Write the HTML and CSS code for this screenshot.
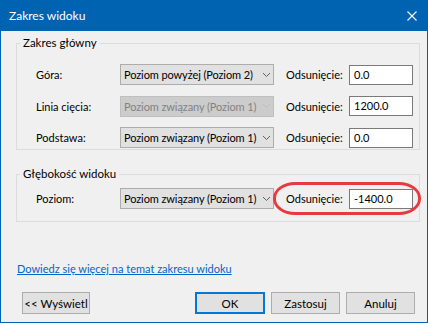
FILE: index.html
```html
<!DOCTYPE html>
<html lang="pl">
<head>
  <meta charset="UTF-8">
  <title>Zakres widoku</title>
  <link rel="stylesheet" href="styles.css">
</head>
<body>
  <div class="window">
    <div class="titlebar">
      <span class="title">Zakres widoku</span>
      <svg class="close" width="10" height="10" viewBox="0 0 10 10">
        <path d="M0.5 0.5 L9.5 9.5 M9.5 0.5 L0.5 9.5" stroke="#fff" stroke-width="1.1" fill="none"/>
      </svg>
    </div>

    <div class="content">
      <fieldset class="group group-main">
        <legend>Zakres główny</legend>
        <div class="rows">
          <label class="lbl">Góra:</label>
          <div class="combo"><span class="combo-text">Poziom powyżej (Poziom 2)</span><svg class="chev" width="7" height="4" viewBox="0 0 7 4"><path d="M0 0 L3.5 3.5 L7 0" /></svg></div>
          <label class="lbl off">Odsunięcie:</label>
          <div class="field">0.0</div>

          <label class="lbl">Linia cięcia:</label>
          <div class="combo disabled"><span class="combo-text">Poziom związany (Poziom 1)</span><svg class="chev" width="7" height="4" viewBox="0 0 7 4"><path d="M0 0 L3.5 3.5 L7 0" /></svg></div>
          <label class="lbl off">Odsunięcie:</label>
          <div class="field">1200.0</div>

          <label class="lbl">Podstawa:</label>
          <div class="combo"><span class="combo-text">Poziom związany (Poziom 1)</span><svg class="chev" width="7" height="4" viewBox="0 0 7 4"><path d="M0 0 L3.5 3.5 L7 0" /></svg></div>
          <label class="lbl off">Odsunięcie:</label>
          <div class="field">0.0</div>
        </div>
      </fieldset>

      <fieldset class="group group-depth">
        <legend>Głębokość widoku</legend>
        <div class="rows">
          <label class="lbl">Poziom:</label>
          <div class="combo"><span class="combo-text">Poziom związany (Poziom 1)</span><svg class="chev" width="7" height="4" viewBox="0 0 7 4"><path d="M0 0 L3.5 3.5 L7 0" /></svg></div>
          <label class="lbl off marked">Odsunięcie:<span class="mark"></span></label>
          <div class="field">-1400.0</div>
        </div>
      </fieldset>

      <a class="help-link" href="#">Dowiedz się więcej na temat zakresu widoku</a>

      <div class="buttons">
        <button class="btn">&lt;&lt; Wyświetl</button>
        <div class="spacer"></div>
        <button class="btn default">OK</button>
        <button class="btn">Zastosuj</button>
        <button class="btn">Anuluj</button>
      </div>
    </div>
  </div>
</body>
</html>
```

FILE: styles.css
```css
    * {
      box-sizing: border-box;
    }

    body {
      margin: 0;
      font-family: Lato, "Liberation Sans", sans-serif;
      font-size: 11px;
      color: #000;
    }

    .window {
      width: 428px;
      height: 323px;
      background-color: #F0F0F0;
      border: 1px solid #0063B1;
      border-top: none;
      display: flex;
      flex-direction: column;
    }

    .titlebar {
      height: 31px;
      margin: 0 -1px;
      background-color: #0063B1;
      color: #FFF;
      display: flex;
      align-items: center;
      padding: 0 11px 1px 9px;
    }

    .title {
      flex: 1;
      font-size: 12px;
    }

    .close {
      margin-top: 1px;
    }

    .content {
      flex: 1;
      padding: 4px 7px 0 15px;
      display: flex;
      flex-direction: column;
    }

    .group {
      margin: 0;
      border: 1px solid #DCDCDC;
      padding: 0;
      min-width: 0;
    }

    .group legend {
      padding: 0 3px;
      margin-left: 3px;
      line-height: 16px;
      font-size: 11.5px;
    }

    .group-main .rows {
      padding-top: 13px;
      padding-bottom: 1px;
    }

    .group-depth {
      margin-top: 16px;
    }

    .group-depth .rows {
      padding-top: 6px;
      padding-bottom: 12px;
    }

    .rows {
      display: grid;
      grid-template-columns: 84px 154px 75px 64px;
      grid-auto-rows: 21px;
      row-gap: 10.5px;
      align-items: center;
      padding-left: 19px;
    }

    .lbl {
      line-height: 21px;
      white-space: nowrap;
    }

    .lbl.off {
      padding-left: 12px;
    }

    .combo {
      height: 21px;
      background-color: #E1E1E1;
      border: 1px solid #ADADAD;
      padding-left: 3px;
      display: flex;
      align-items: center;
    }

    .combo-text {
      flex: 1;
      white-space: nowrap;
      letter-spacing: -0.1px;
    }

    .chev {
      flex: none;
      margin: 0 3px 0 2px;
      fill: none;
      stroke: #606060;
      stroke-width: 1;
    }

    .combo.disabled {
      background-color: #CCCCCC;
      border-color: #BFBFBF;
      color: #838383;
    }

    .combo.disabled .chev {
      stroke: #BFBFBF;
    }

    .field {
      height: 20px;
      line-height: 18px;
      background-color: #FFF;
      border: 1px solid #7A7A7A;
      padding-left: 4px;
    }

    .marked {
      position: relative;
    }

    .mark {
      position: absolute;
      left: -1px;
      top: -6px;
      width: 148px;
      height: 33px;
      border: 3px solid #E8393F;
      border-radius: 22px / 16px;
    }

    .help-link {
      margin-top: 39px;
      margin-left: 1px;
      line-height: 16px;
      color: #0066CC;
      text-decoration: underline;
      align-self: flex-start;
    }

    .buttons {
      margin-top: 15px;
      display: flex;
      gap: 6px;
      padding: 0 5px 0 6px;
    }

    .spacer {
      flex: 1;
    }

    .btn {
      font-family: inherit;
      font-size: 11.5px;
      height: 22px;
      width: 69px;
      padding: 0;
      background-color: #E1E1E1;
      border: 1px solid #ADADAD;
      color: #000;
      white-space: nowrap;
    }

    .btn:first-child {
      width: 68px;
    }

    .btn.default {
      border: 2px solid #0078D7;
      width: 70px;
    }
```
